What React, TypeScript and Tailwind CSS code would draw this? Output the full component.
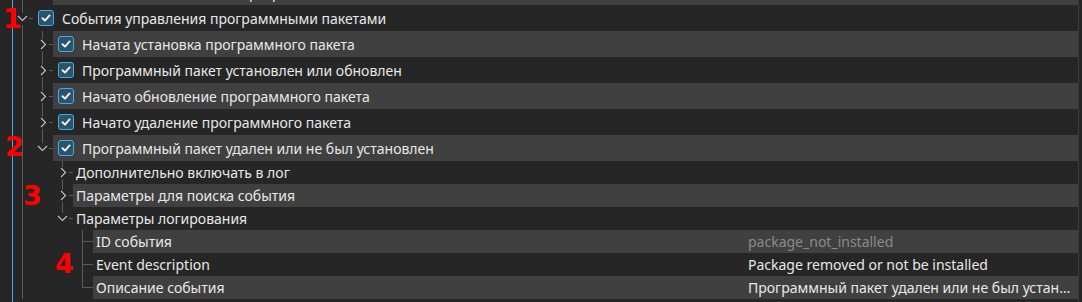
import React from 'react';

interface Row {
  level: number;
  h: number;
  text: string;
  value?: string;
  muted?: boolean;
  check?: boolean;
  children?: boolean;
  expanded?: boolean;
  last?: boolean;
  // for each ancestor column: true = draw continuing line
  guides: boolean[];
}

const rows: Row[] = [
  { level: 2, h: 26, text: 'Отменено обновление программного пакета', check: true, children: true, last: true, guides: [true] },
  { level: 1, h: 26, text: 'События управления программными пакетами', check: true, children: true, expanded: true, guides: [] },
  { level: 2, h: 26, text: 'Начата установка программного пакета', check: true, children: true, guides: [true] },
  { level: 2, h: 26, text: 'Программный пакет установлен или обновлен', check: true, children: true, guides: [true] },
  { level: 2, h: 26, text: 'Начато обновление программного пакета', check: true, children: true, guides: [true] },
  { level: 2, h: 26, text: 'Начато удаление программного пакета', check: true, children: true, guides: [true] },
  { level: 2, h: 26, text: 'Программный пакет удален или не был установлен', check: true, children: true, expanded: true, last: true, guides: [true] },
  { level: 3, h: 23, text: 'Дополнительно включать в лог', children: true, guides: [true, false] },
  { level: 3, h: 23, text: 'Параметры для поиска события', children: true, guides: [true, false] },
  { level: 3, h: 23, text: 'Параметры логирования', children: true, expanded: true, last: true, guides: [true, false] },
  { level: 4, h: 23, text: 'ID события', value: 'package_not_installed', muted: true, guides: [true, false, false] },
  { level: 4, h: 23, text: 'Event description', value: 'Package removed or not be installed', guides: [true, false, false] },
  { level: 4, h: 23, text: 'Описание события', value: 'Программный пакет удален или не был устан…', last: true, guides: [true, false, false] },
];

const LINE = '#5a5a5a';

// one 20px indentation cell of the tree
const Branch = ({ h, own, guide, row }: { h: number; own: boolean; guide: boolean; row: Row }) => {
  const cx = 9.5;
  const cy = Math.floor(h / 2) + 0.5;
  if (!own) {
    return (
      <svg width="20" height={h} className="shrink-0" shapeRendering="crispEdges">
        {guide && <line x1={cx} y1={0} x2={cx} y2={h} stroke={LINE} />}
      </svg>
    );
  }
  const adj = row.children ? 6 : 0;
  return (
    <svg width="20" height={h} className="shrink-0">
      <g shapeRendering="crispEdges" stroke={LINE}>
        <line x1={cx + adj} y1={cy} x2={20} y2={cy} />
        <line x1={cx} y1={0} x2={cx} y2={cy - adj} />
        {!row.last && <line x1={cx} y1={cy + adj} x2={cx} y2={h} />}
      </g>
      {row.children &&
        (row.expanded ? (
          <polyline points={`${cx - 4.5},${cy - 2.5} ${cx},${cy + 2} ${cx + 4.5},${cy - 2.5}`} fill="none" stroke="#c4c4c4" strokeWidth="1.1" />
        ) : (
          <polyline points={`${cx - 1.5},${cy - 4.5} ${cx + 3},${cy} ${cx - 1.5},${cy + 4.5}`} fill="none" stroke="#c4c4c4" strokeWidth="1.1" />
        ))}
    </svg>
  );
};

const CheckBox = () => (
  <div className="w-[16px] h-[16px] shrink-0 rounded-[3px] border border-[#3daee9] bg-[#2c5369] flex items-center justify-center">
    <svg width="12" height="12" viewBox="0 0 12 12">
      <polyline points="2.5,6.2 5,8.6 9.6,3.4" fill="none" stroke="#f2f2f2" strokeWidth="1.9" strokeLinecap="round" strokeLinejoin="round" />
    </svg>
  </div>
);

const TreeRow = ({ row, band }: { row: Row; band: boolean }) => {
  const cells = [];
  for (let i = 0; i < row.level; i++) {
    const own = i === row.level - 1;
    cells.push(<Branch key={i} h={row.h} own={own} guide={!!row.guides[i]} row={row} />);
  }
  return (
    <div className="flex" style={{ height: row.h }}>
      {cells}
      <div className={`flex-1 min-w-0 flex items-center ${band ? 'bg-[#404040]' : ''}`}>
        <div className={`flex-1 min-w-0 flex items-center ${row.check ? 'pl-[5px]' : 'pl-[3px]'}`}>
          {row.check && <CheckBox />}
          <span className={`whitespace-nowrap ${row.check ? 'ml-[8px]' : ''}`}>{row.text}</span>
        </div>
        <div className={`w-[333px] shrink-0 pl-[3px] pr-[4px] whitespace-nowrap overflow-hidden ${row.muted ? 'text-[#8a8a8a]' : ''}`}>
          {row.value}
        </div>
      </div>
    </div>
  );
};

export default function App() {
  return (
    <div
      className="relative w-[1082px] h-[302px] overflow-hidden bg-[#262626] text-[#e8e8e8] text-[14px] flex"
      style={{ fontFamily: '"Noto Sans", "Open Sans", sans-serif' }}
    >
      <div className="w-[12px] shrink-0" />
      <div className="w-px shrink-0 bg-[#3daee9]" />
      <div className="flex-1 min-w-0 overflow-hidden">
        <div className="-mt-[21px]">
          {rows.map((r, i) => (
            <TreeRow key={i} row={r} band={i % 2 === 0} />
          ))}
        </div>
      </div>
      <div className="w-px shrink-0 bg-[#3a3a3a]" />
      <div className="w-[3px] shrink-0" />

      {/* red annotation numbers */}
      <div
        className="absolute inset-0 pointer-events-none text-[#ff0000] font-bold text-[27px] leading-none"
        style={{ fontFamily: '"DejaVu Sans", sans-serif' }}
      >
        <span className="absolute left-[3px] top-[5px]">1</span>
        <span className="absolute left-[5px] top-[133px]">2</span>
        <span className="absolute left-[23px] top-[182px]">3</span>
        <span className="absolute left-[55px] top-[250px]">4</span>
      </div>
    </div>
  );
}
